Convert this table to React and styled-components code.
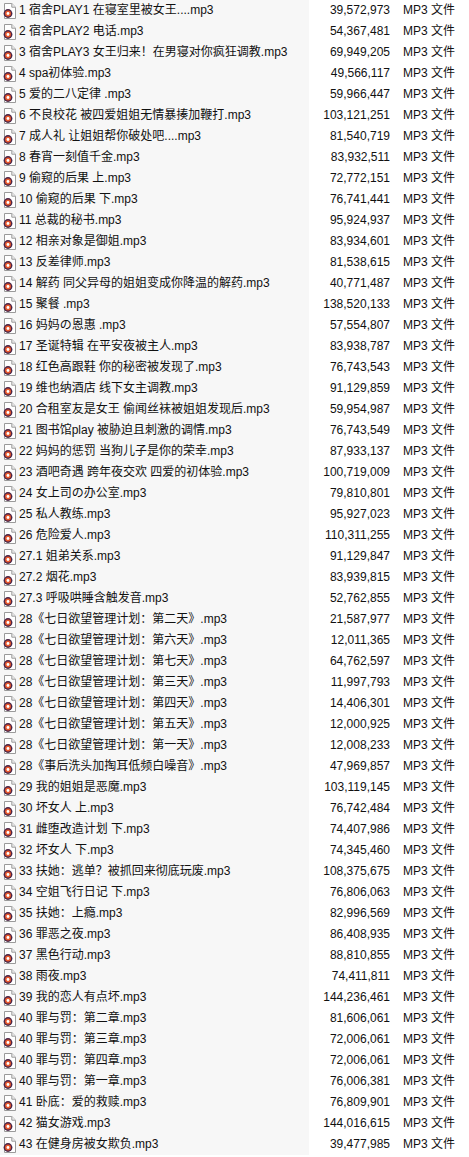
import React from "react"
import styled, { createGlobalStyle } from "styled-components"

const GlobalStyle = createGlobalStyle`
  html, body {
    margin: 0;
    padding: 0;
    background: #ffffff;
  }
  body {
    font-family: "Liberation Sans", "Noto Sans CJK SC", sans-serif;
    font-size: 12px;
    color: #111111;
  }
`

const List = styled.div`
  display: flex;
  flex-direction: column;
  width: 469px;
`

const Row = styled.div`
  display: grid;
  grid-template-columns: 309px 81px 1fr;
  height: 21px;
  align-items: stretch;
`

const NameCell = styled.div`
  display: flex;
  align-items: center;
  gap: 3px;
  padding-left: 3px;
  background: #f7f7f7;
  white-space: nowrap;
  overflow: hidden;
`

const SizeCell = styled.div`
  display: flex;
  align-items: center;
  justify-content: flex-end;
  white-space: nowrap;
`

const TypeCell = styled.div`
  display: flex;
  align-items: center;
  padding-left: 13px;
  white-space: nowrap;
`

const Label = styled.span`
  line-height: 21px;
`

const Mp3Icon = () => (
  <svg width="13" height="16" viewBox="0 0 13 16">
    <path d="M1.5 0.5 H8.8 L12.5 4.2 V15.5 H1.5 Z" fill="#ffffff" stroke="#9a9a9a" />
    <path d="M8.8 0.5 V4.2 H12.5" fill="#eeeeee" stroke="#9a9a9a" />
    <circle cx="5" cy="10.5" r="4.4" fill="#4a2446" />
    <circle cx="5" cy="10.5" r="3" fill="#e8582c" />
    <circle cx="5" cy="10.5" r="1.4" fill="#ffffff" />
  </svg>
)

const files = [
  ["1 宿舍PLAY1 在寝室里被女王....mp3", "39,572,973"],
  ["2 宿舍PLAY2 电话.mp3", "54,367,481"],
  ["3 宿舍PLAY3 女王归来！在男寝对你疯狂调教.mp3", "69,949,205"],
  ["4 spa初体验.mp3", "49,566,117"],
  ["5 爱的二八定律 .mp3", "59,966,447"],
  ["6 不良校花 被四爱姐姐无情暴揍加鞭打.mp3", "103,121,251"],
  ["7 成人礼 让姐姐帮你破处吧....mp3", "81,540,719"],
  ["8 春宵一刻值千金.mp3", "83,932,511"],
  ["9 偷窥的后果 上.mp3", "72,772,151"],
  ["10 偷窥的后果 下.mp3", "76,741,441"],
  ["11 总裁的秘书.mp3", "95,924,937"],
  ["12 相亲对象是御姐.mp3", "83,934,601"],
  ["13 反差律师.mp3", "81,538,615"],
  ["14 解药 同父异母的姐姐变成你降温的解药.mp3", "40,771,487"],
  ["15 聚餐 .mp3", "138,520,133"],
  ["16 妈妈の恩惠 .mp3", "57,554,807"],
  ["17 圣诞特辑 在平安夜被主人.mp3", "83,938,787"],
  ["18 红色高跟鞋 你的秘密被发现了.mp3", "76,743,543"],
  ["19 维也纳酒店 线下女主调教.mp3", "91,129,859"],
  ["20 合租室友是女王 偷闻丝袜被姐姐发现后.mp3", "59,954,987"],
  ["21 图书馆play 被胁迫且刺激的调情.mp3", "76,743,549"],
  ["22 妈妈的惩罚 当狗儿子是你的荣幸.mp3", "87,933,137"],
  ["23 酒吧奇遇 跨年夜交欢 四爱的初体验.mp3", "100,719,009"],
  ["24 女上司の办公室.mp3", "79,810,801"],
  ["25 私人教练.mp3", "95,927,023"],
  ["26 危险爱人.mp3", "110,311,255"],
  ["27.1 姐弟关系.mp3", "91,129,847"],
  ["27.2 烟花.mp3", "83,939,815"],
  ["27.3 呼吸哄睡含触发音.mp3", "52,762,855"],
  ["28《七日欲望管理计划：第二天》.mp3", "21,587,977"],
  ["28《七日欲望管理计划：第六天》.mp3", "12,011,365"],
  ["28《七日欲望管理计划：第七天》.mp3", "64,762,597"],
  ["28《七日欲望管理计划：第三天》.mp3", "11,997,793"],
  ["28《七日欲望管理计划：第四天》.mp3", "14,406,301"],
  ["28《七日欲望管理计划：第五天》.mp3", "12,000,925"],
  ["28《七日欲望管理计划：第一天》.mp3", "12,008,233"],
  ["28《事后洗头加掏耳低频白噪音》.mp3", "47,969,857"],
  ["29 我的姐姐是恶魔.mp3", "103,119,145"],
  ["30 坏女人 上.mp3", "76,742,484"],
  ["31 雌堕改造计划 下.mp3", "74,407,986"],
  ["32 坏女人 下.mp3", "74,345,460"],
  ["33 扶她：逃单？被抓回来彻底玩废.mp3", "108,375,675"],
  ["34 空姐飞行日记 下.mp3", "76,806,063"],
  ["35 扶她：上瘾.mp3", "82,996,569"],
  ["36 罪恶之夜.mp3", "86,408,935"],
  ["37 黑色行动.mp3", "88,810,855"],
  ["38 雨夜.mp3", "74,411,811"],
  ["39 我的恋人有点坏.mp3", "144,236,461"],
  ["40 罪与罚：第二章.mp3", "81,606,061"],
  ["40 罪与罚：第三章.mp3", "72,006,061"],
  ["40 罪与罚：第四章.mp3", "72,006,061"],
  ["40 罪与罚：第一章.mp3", "76,006,381"],
  ["41 卧底：爱的救赎.mp3", "76,809,901"],
  ["42 猫女游戏.mp3", "144,016,615"],
  ["43 在健身房被女欺负.mp3", "39,477,985"],
]

const App = () => (
  <>
    <GlobalStyle />
    <List>
      {files.map(([name, size], i) => (
        <Row key={i}>
          <NameCell>
            <Mp3Icon />
            <Label>{name}</Label>
          </NameCell>
          <SizeCell>
            <Label>{size}</Label>
          </SizeCell>
          <TypeCell>
            <Label>MP3 文件</Label>
          </TypeCell>
        </Row>
      ))}
    </List>
  </>
)

export default App
